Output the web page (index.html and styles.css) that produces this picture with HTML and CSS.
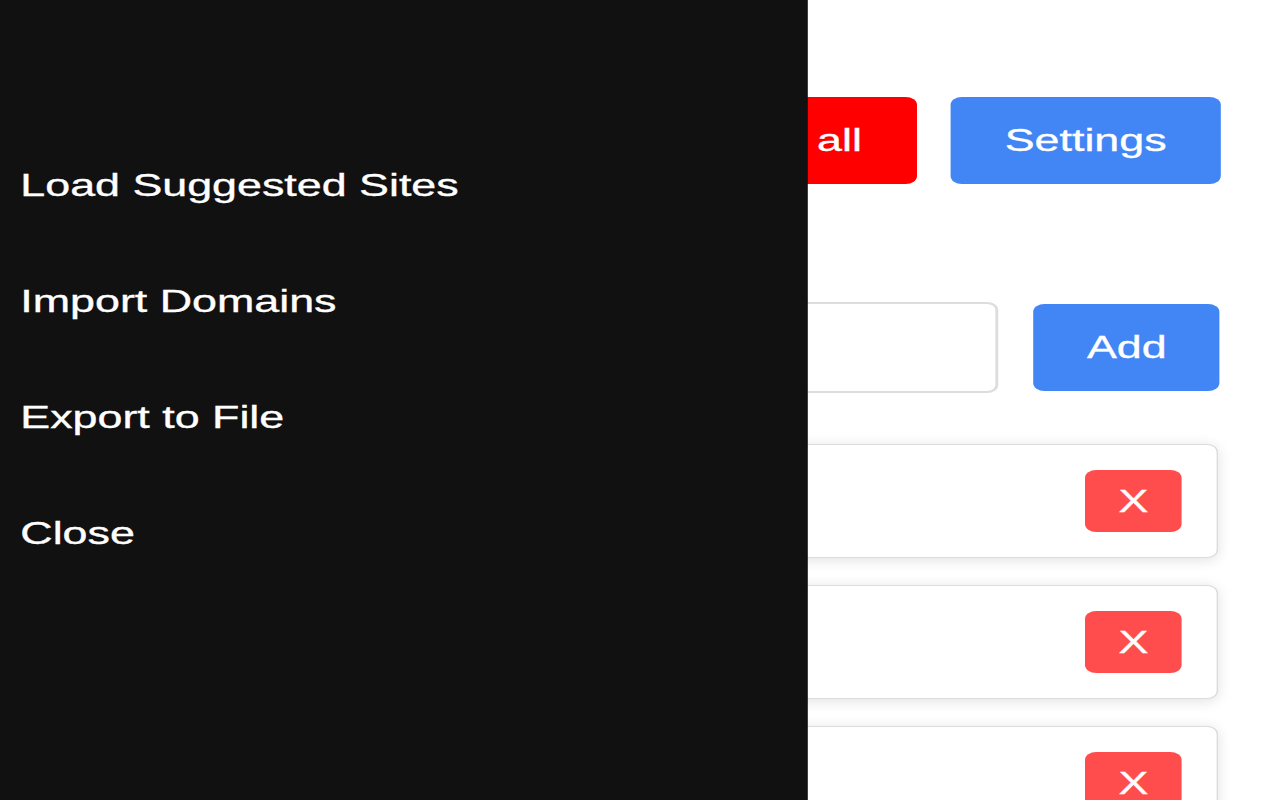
FILE: index.html
```html
<!DOCTYPE html>
<html lang="en">
<head>
<meta charset="utf-8">
<title>Site Blocker</title>
<link rel="stylesheet" href="styles.css">
</head>
<body>
<div class="stage">
  <main class="page">
    <div class="toolbar">
      <button class="btn btn-danger">Clear all</button>
      <button class="btn btn-primary">Settings</button>
    </div>
    <div class="add-row">
      <input class="domain-input" type="text" placeholder="">
      <button class="btn btn-primary btn-add">Add</button>
    </div>
    <ul class="site-list">
      <li class="site-card"><span class="site-name">facebook.com</span><button class="btn-remove">X</button></li>
      <li class="site-card"><span class="site-name">twitter.com</span><button class="btn-remove">X</button></li>
      <li class="site-card"><span class="site-name">youtube.com</span><button class="btn-remove">X</button></li>
    </ul>
  </main>
  <nav class="drawer">
    <a class="drawer-item">Load Suggested Sites</a>
    <a class="drawer-item">Import Domains</a>
    <a class="drawer-item">Export to File</a>
    <a class="drawer-item">Close</a>
  </nav>
</div>
</body>
</html>
```

FILE: styles.css
```css
html, body {
  margin: 0;
  padding: 0;
  width: 1280px;
  height: 800px;
  overflow: hidden;
  background: #ffffff;
}

.stage {
  position: relative;
  width: 914.2857px;
  height: 800px;
  transform: scaleX(1.4);
  transform-origin: 0 0;
  font-family: "Liberation Sans", Arial, sans-serif;
  font-size: 32px;
  -webkit-text-stroke: 0.35px currentColor;
}

.page {
  display: flex;
  flex-direction: column;
  padding: 97px 42px 0 20px;
}

.toolbar {
  display: flex;
  justify-content: flex-end;
  gap: 24px;
}

.btn {
  font-family: inherit;
  font-size: 32px;
  line-height: 37px;
  padding: 25px 39px;
  border: none;
  border-radius: 8px;
  color: #ffffff;
  cursor: pointer;
  -webkit-text-stroke: 0.35px #ffffff;
}

.btn-primary {
  background: #4285f4;
}

.btn-danger {
  background: #ff0000;
}

.btn-add {
  padding: 25px 38px;
}

.add-row {
  display: flex;
  align-items: center;
  gap: 25px;
  margin-top: 118px;
  margin-right: 1px;
}

.domain-input {
  flex: 1;
  height: 91px;
  box-sizing: border-box;
  border: 2px solid #dddddd;
  border-radius: 8px;
  font-family: inherit;
  font-size: 32px;
  padding: 0 20px;
}

.site-list {
  list-style: none;
  margin: 51px 2px 0 0;
  padding: 0;
  display: flex;
  flex-direction: column;
  gap: 27px;
}

.site-card {
  display: flex;
  align-items: center;
  justify-content: space-between;
  padding: 25px;
  border: 1px solid #dcdcdc;
  border-radius: 8px;
  background: #ffffff;
  box-shadow: 0 2px 12px rgba(0, 0, 0, 0.12);
}

.site-name {
  color: #333333;
}

.btn-remove {
  font-family: inherit;
  font-size: 32px;
  line-height: 38px;
  padding: 12px 24px;
  border: none;
  border-radius: 8px;
  background: #ff4d4d;
  color: #ffffff;
  -webkit-text-stroke: 0.35px #ffffff;
}

.drawer {
  position: absolute;
  top: 0;
  left: 0;
  width: 577px;
  height: 800px;
  background: #111111;
  display: flex;
  flex-direction: column;
  padding-top: 127px;
  box-sizing: border-box;
}

.drawer-item {
  display: block;
  color: #ffffff;
  line-height: 36px;
  padding: 40px 14.5px;
  cursor: pointer;
}
```
